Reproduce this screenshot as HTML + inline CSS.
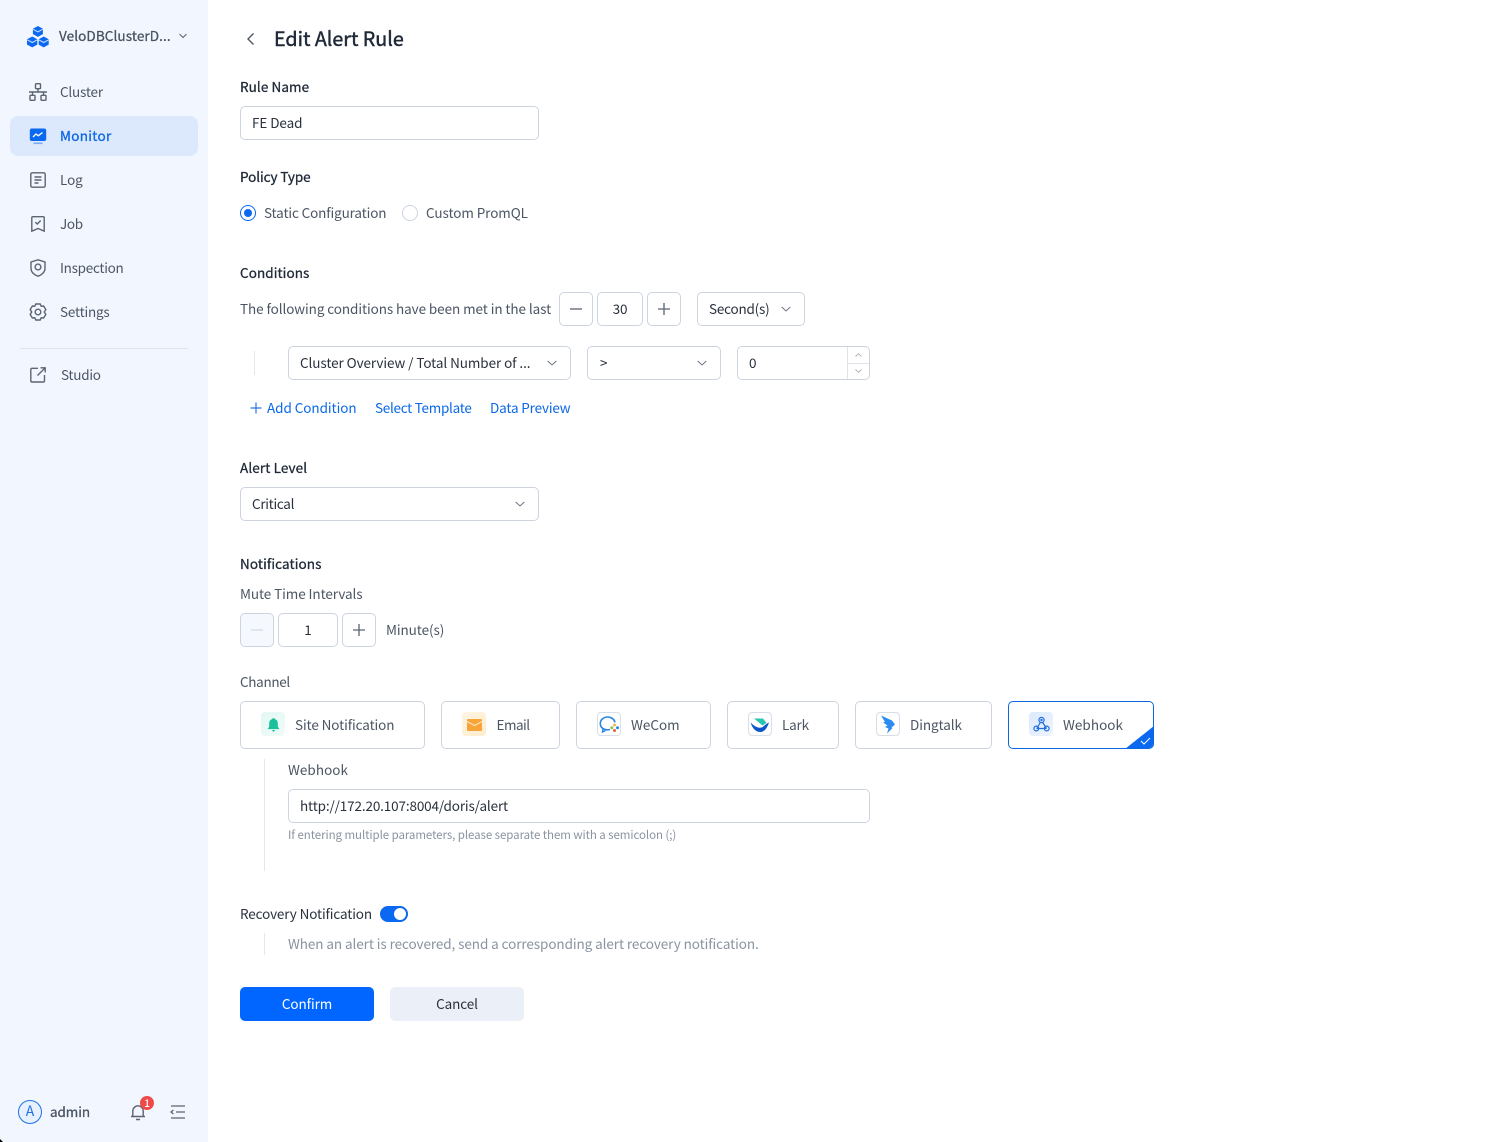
<!DOCTYPE html>
<html lang="en"><head><meta charset="utf-8"><title>Edit Alert Rule</title>
<style>
*{box-sizing:border-box}
html,body{margin:0;padding:0;width:1511px;height:1142px;overflow:hidden;background:#fff}
body{font-family:"Noto Sans CJK SC","Liberation Sans",sans-serif;font-size:13.5px;letter-spacing:-.08px;color:#4b5563;position:relative}
.t{position:absolute;white-space:nowrap;line-height:20px;height:20px;margin-top:-1px}
.b{position:absolute;background:#fff;border:1px solid #cdd4e0;border-radius:5px}
.l{color:#1f2937;-webkit-text-stroke:.3px #1f2937;letter-spacing:.08px}
.c{color:#2a313c}
.lnk{color:#0b68e6}
svg{position:absolute;overflow:visible}
.g{fill:none;stroke:#5b6472;stroke-width:1.4}
.ch{border-radius:5px;height:48px;top:701px}
.ic{position:absolute;top:712px;width:24px;height:24px;border-radius:4px}
.ic2{background:#fff;border:1px solid #d9dee7}
</style></head><body>

<div style="position:absolute;left:0;top:0;width:208px;height:1142px;background:#f2f7ff"></div>
<div style="position:absolute;left:10px;top:116px;width:188px;height:40px;border-radius:8px;background:#dce8fb"></div>
<div style="position:absolute;left:20px;top:348px;width:168px;height:1px;background:#dfe4ec"></div>

<!-- logo -->
<svg style="left:26px;top:25px" width="24" height="24" viewBox="0 0 24 24">
<path fill="#0b68f0" d="M11.900 1l5 2.700v5.400l-5 2.800-5-2.800V3.700z"/><path fill="#0b68f0" d="M6.300 11.500l5 2.800v5.300l-5 2.800-5.300-2.800v-5.300z"/><path fill="#0b68f0" d="M17.700 11.500l5 2.800v5.300l-5 2.800-5-2.800v-5.300z"/>
<path d="M7.200 4.300l4.700 2.600 4.700-2.600M1.300 14.800l5 2.700 5-2.700M12.700 14.800l5 2.700 5-2.700" fill="none" stroke="#cfe0fb" stroke-width="1"/></svg>
<div class="t" style="left:59px;top:26px;color:#4a5361;-webkit-text-stroke:.3px #4a5361;letter-spacing:.1px">VeloDBClusterD...</div>
<svg style="left:179px;top:33px" width="8" height="6" viewBox="0 0 8 6"><path d="M.5 1l3.500 3.500L7.500 1" fill="none" stroke="#5b6472" stroke-width="1"/></svg>

<!-- nav icons -->
<svg style="left:29px;top:83px" width="18" height="18" viewBox="0 0 18 18" class="g"><rect x="6.500" y=".7" width="5" height="5" rx=".8"/><rect x="1" y="12.300" width="5" height="5" rx=".8"/><rect x="12" y="12.300" width="5" height="5" rx=".8"/><path d="M9 5.700V9M3.500 12.300V9h11v3.300M0 9h18"/></svg>
<div class="t" style="left:60px;top:82px;letter-spacing:-.2px">Cluster</div>

<svg style="left:29px;top:128px" width="18" height="18" viewBox="0 0 18 18"><rect x=".8" y=".5" width="16.400" height="12.500" rx="2" fill="#0b68f0"/><rect x="4.500" y="14.500" width="9" height="1.600" fill="#7aaaf5"/><path d="M4 9l3-3 2.300 1.800L13.500 4.500" fill="none" stroke="#fff" stroke-width="1.300"/></svg>
<div class="t" style="left:60px;top:126px;color:#0b68e6;-webkit-text-stroke:.3px #0b68e6;letter-spacing:.3px">Monitor</div>

<svg style="left:30px;top:172px" width="16" height="16" viewBox="0 0 16 16" class="g"><rect x=".8" y=".8" width="14.400" height="14.400" rx="1.500"/><path d="M4.500 5h7M4.500 8h7M4.500 11h4"/></svg>
<div class="t" style="left:60px;top:170px">Log</div>

<svg style="left:31px;top:216px" width="14" height="16" viewBox="0 0 14 16" class="g"><path d="M.8 1.700q0-1 1-1h10.400q1 0 1 1v13.500L7 12.500.8 15.200z"/><path d="M4.300 6.200L6.300 8l3.400-3.500"/></svg>
<div class="t" style="left:60px;top:214px;letter-spacing:-.3px">Job</div>

<svg style="left:30px;top:259px" width="16" height="18" viewBox="0 0 16 18" class="g"><path d="M8 .8l7 2.200v6.500c0 3.600-3.200 6.400-7 7.700-3.800-1.300-7-4.100-7-7.700V3z"/><circle cx="8" cy="8" r="2.900"/></svg>
<div class="t" style="left:60px;top:258px;letter-spacing:-.28px">Inspection</div>

<svg style="left:29px;top:303px" width="18" height="18" viewBox="0 0 18 18" class="g"><path d="M6.800 1h4.400l1 2.200 2.400-.2 2.200 3.500L15.300 9l1.500 2.500-2.200 3.500-2.400-.2-1 2.200H6.800l-1-2.200-2.400.2-2.200-3.500L2.700 9 1.200 6.500 3.400 3l2.400.2z"/><circle cx="9" cy="9" r="2.800"/></svg>
<div class="t" style="left:60px;top:302px;letter-spacing:-.2px">Settings</div>

<svg style="left:30px;top:367px" width="16" height="16" viewBox="0 0 16 16" class="g"><path d="M8 1.300H2q-1.200 0-1.200 1.200v11.300q0 1.200 1.200 1.200h11.300q1.200 0 1.200-1.200V8"/><path d="M7.500 8.500L15 1M10.500.8h4.700v4.700"/></svg>
<div class="t" style="left:61px;top:365px;letter-spacing:-.25px">Studio</div>

<!-- footer -->
<div style="position:absolute;left:18px;top:1100px;width:24px;height:24px;border-radius:50%;border:1.300px solid #1e70e6;background:#e6f0fe;color:#1e70e6;text-align:center;line-height:21px;font-size:14px">A</div>
<div class="t" style="left:50px;top:1102px;color:#4b5563;-webkit-text-stroke:.3px #4b5563">admin</div>
<svg style="left:130px;top:1103px" width="16" height="18" viewBox="0 0 16 18" class="g"><path d="M1 13.500h14M2.800 13.500V8a5.200 5.200 0 0 1 10.400 0v5.500M6 16.500h4"/></svg>
<div style="position:absolute;left:140px;top:1096px;width:14px;height:14px;border-radius:50%;background:#f04b4b;color:#fff;font-size:10px;line-height:14px;text-align:center;font-weight:500">1</div>
<svg style="left:170px;top:1105px" width="15" height="14" viewBox="0 0 15 14" fill="none" stroke="#5b6472" stroke-width="1.300"><path d="M1 1h14M6 7h9M1 13h14M3.500 5L1 7l2.500 2"/></svg>
<div style="position:absolute;left:0;bottom:0;width:3px;height:3px;background:#000;clip-path:polygon(0 0,100% 100%,0 100%)"></div>

<!-- header -->
<svg style="left:246px;top:32px" width="9" height="14" viewBox="0 0 9 14"><path d="M7.500 1.500L2 7l5.500 5.500" fill="none" stroke="#4b5563" stroke-width="1.400"/></svg>
<div class="t" style="left:274px;top:26px;height:26px;line-height:26px;font-size:19.7px;letter-spacing:0;color:#1f2937;-webkit-text-stroke:.45px #1f2937">Edit Alert Rule</div>

<div class="t l" style="left:240px;top:77px">Rule Name</div>
<div class="b" style="left:240px;top:106px;width:299px;height:34px"></div>
<div class="t c" style="left:252px;top:113px">FE Dead</div>

<div class="t l" style="left:240px;top:167px;letter-spacing:-.08px">Policy Type</div>
<div style="position:absolute;left:240px;top:205px;width:16px;height:16px;border-radius:50%;border:1px solid #0b68f0;background:#fff"></div>
<div style="position:absolute;left:244px;top:209px;width:8px;height:8px;border-radius:50%;background:#0b68f0"></div>
<div class="t" style="left:264px;top:203px;letter-spacing:-.13px">Static Configuration</div>
<div style="position:absolute;left:402px;top:205px;width:16px;height:16px;border-radius:50%;border:1px solid #cdd4e0;background:#fff"></div>
<div class="t" style="left:426px;top:203px">Custom PromQL</div>

<div class="t l" style="left:240px;top:263px">Conditions</div>
<div class="t" style="left:240px;top:299px">The following conditions have been met in the last</div>
<div class="b" style="left:559px;top:292px;width:34px;height:34px"></div>
<svg style="left:570px;top:303px" width="12" height="12" viewBox="0 0 12 12"><path d="M0 6h12" stroke="#5b6472" stroke-width="1.300"/></svg>
<div class="b" style="left:597px;top:292px;width:46px;height:34px"></div>
<div class="t c" style="left:597px;top:299px;width:46px;text-align:center">30</div>
<div class="b" style="left:647px;top:292px;width:34px;height:34px"></div>
<svg style="left:658px;top:303px" width="12" height="12" viewBox="0 0 12 12"><path d="M0 6h12M6 0v12" stroke="#5b6472" stroke-width="1.300"/></svg>
<div class="b" style="left:697px;top:292px;width:108px;height:34px"></div>
<div class="t c" style="left:709px;top:299px;letter-spacing:-.2px">Second(s)</div>
<svg style="left:781px;top:306px" width="10" height="6" viewBox="0 0 10 6"><path d="M.7 1L5 5l4.300-4" fill="none" stroke="#6b7482"/></svg>

<div style="position:absolute;left:254px;top:351px;width:1px;height:24px;background:#e3e7ee"></div>
<div class="b" style="left:288px;top:346px;width:283px;height:34px"></div>
<div class="t c" style="left:300px;top:353px">Cluster Overview / Total Number of ...</div>
<svg style="left:547px;top:360px" width="10" height="6" viewBox="0 0 10 6"><path d="M.7 1L5 5l4.300-4" fill="none" stroke="#6b7482"/></svg>
<div class="b" style="left:587px;top:346px;width:134px;height:34px"></div>
<div class="t c" style="left:600px;top:353px">&gt;</div>
<svg style="left:697px;top:360px" width="10" height="6" viewBox="0 0 10 6"><path d="M.7 1L5 5l4.300-4" fill="none" stroke="#6b7482"/></svg>
<div class="b" style="left:737px;top:346px;width:133px;height:34px"></div>
<div style="position:absolute;left:847px;top:347px;width:1px;height:32px;background:#dfe3ea"></div>
<div style="position:absolute;left:847px;top:363px;width:22px;height:1px;background:#dfe3ea"></div>
<svg style="left:855px;top:353px" width="7" height="4" viewBox="0 0 7 4"><path d="M.5 3.500L3.500.7l3 2.800" fill="none" stroke="#a8afba" stroke-width=".9"/></svg>
<svg style="left:855px;top:369px" width="7" height="4" viewBox="0 0 7 4"><path d="M.5.500l3 2.800 3-2.800" fill="none" stroke="#a8afba" stroke-width=".9"/></svg>
<div class="t c" style="left:749px;top:353px">0</div>

<svg style="left:250px;top:402px" width="12" height="12" viewBox="0 0 12 12"><path d="M.5 6h11M6 .5v11" stroke="#2a76e6" stroke-width="1.200"/></svg>
<div class="t lnk" style="left:267px;top:398px;letter-spacing:-.06px">Add Condition</div>
<div class="t lnk" style="left:375px;top:398px;letter-spacing:-.28px">Select Template</div>
<div class="t lnk" style="left:490px;top:398px;letter-spacing:-.16px">Data Preview</div>

<div class="t l" style="left:240px;top:458px;letter-spacing:.12px">Alert Level</div>
<div class="b" style="left:240px;top:487px;width:299px;height:34px"></div>
<div class="t c" style="left:252px;top:494px;letter-spacing:-.3px">Critical</div>
<svg style="left:515px;top:501px" width="10" height="6" viewBox="0 0 10 6"><path d="M.7 1L5 5l4.300-4" fill="none" stroke="#6b7482"/></svg>

<div class="t l" style="left:240px;top:554px;letter-spacing:.1px">Notifications</div>
<div class="t" style="left:240px;top:584px">Mute Time Intervals</div>
<div class="b" style="left:240px;top:613px;width:34px;height:34px;background:#f5f8fd"></div>
<svg style="left:251px;top:624px" width="12" height="12" viewBox="0 0 12 12"><path d="M0 6h12" stroke="#d5dae3" stroke-width="1.300"/></svg>
<div class="b" style="left:278px;top:613px;width:60px;height:34px"></div>
<div class="t c" style="left:278px;top:620px;width:60px;text-align:center">1</div>
<div class="b" style="left:342px;top:613px;width:34px;height:34px"></div>
<svg style="left:353px;top:624px" width="12" height="12" viewBox="0 0 12 12"><path d="M0 6h12M6 0v12" stroke="#5b6472" stroke-width="1.300"/></svg>
<div class="t" style="left:386px;top:620px">Minute(s)</div>

<div class="t" style="left:240px;top:672px;letter-spacing:-.32px">Channel</div>

<div class="b ch" style="left:240px;width:185px"></div>
<div class="ic" style="left:261px;background:linear-gradient(135deg,#e3f8f2,#f1fbf8)"></div>
<svg style="left:266.500px;top:717.500px" width="13" height="14" viewBox="0 0 12 13"><path fill="#1cc09a" d="M6 0c.6 0 1 .4 1 .9 1.900.4 3 2 3 4V8l1.500 2.300H.5L2 8V4.900c0-2 1.100-3.500 3-4C5 .4 5.400 0 6 0zM4.500 11.200h3L6 13z"/></svg>
<div class="t" style="left:295px;top:715px;letter-spacing:-.1px">Site Notification</div>

<div class="b ch" style="left:441px;width:119px"></div>
<div class="ic" style="left:462px;background:linear-gradient(135deg,#fff4e2,#ffeccd)"></div>
<svg style="left:467px;top:719px" width="15" height="12" viewBox="0 0 15 12"><rect width="15" height="12" rx="1" fill="#f7a53a"/><path d="M0 2.500l7.500 4 7.500-4" fill="none" stroke="#ffe6c0" stroke-width="1"/></svg>
<div class="t" style="left:496.500px;top:715px;letter-spacing:-.5px">Email</div>

<div class="b ch" style="left:576px;width:135px"></div>
<div class="ic ic2" style="left:597px"></div>
<svg style="left:599px;top:715px" width="21" height="19" viewBox="0 0 21 19"><path d="M11 14.500C6 15.500 1.300 13.500 1.300 8.500 1.300 4.500 5 2 8.500 2c3.700 0 6.700 2 7.500 5.300" fill="none" stroke="#2b87e3" stroke-width="1.600"/><path d="M4 14l-.5 3 3-1.500" fill="none" stroke="#2b87e3" stroke-width="1.400"/><circle cx="15.500" cy="10" r="1.500" fill="#f2b84b"/><circle cx="18.500" cy="12.800" r="1.500" fill="#2b87e3"/><circle cx="12.800" cy="12.800" r="1.500" fill="#89c54b"/><circle cx="15.500" cy="15.500" r="1.500" fill="#e2603f"/></svg>
<div class="t" style="left:631px;top:715px;letter-spacing:0">WeCom</div>

<div class="b ch" style="left:727px;width:112px"></div>
<div class="ic ic2" style="left:748px"></div>
<svg style="left:750px;top:718px" width="20" height="15" viewBox="0 0 20 15"><path fill="#2ac5b0" d="M4 .5h9l3.500 4.500-4 2.500z"/><path fill="#0b55c8" d="M.5 4.500c3 3 7 6 11 5 2-.5 4-3.500 7.500-5-1.500 4-3.500 9.500-9 9.500C5 14 2 9 .5 4.500z"/></svg>
<div class="t" style="left:782px;top:715px;letter-spacing:-.2px">Lark</div>

<div class="b ch" style="left:855px;width:137px"></div>
<div class="ic ic2" style="left:876px"></div>
<svg style="left:881px;top:715px" width="15" height="19" viewBox="0 0 15 19"><path fill="#2a8cf0" d="M0 .5l11 5 3 4-3.500 3 1 .5L6 18.500l1.500-5L4 12 6.500 10.500 2 7.500 4 7z"/></svg>
<div class="t" style="left:910px;top:715px">Dingtalk</div>

<div class="b ch" style="left:1008px;width:146px;border:1.300px solid #0b68e0;overflow:hidden">
<div style="position:absolute;right:-1px;bottom:-1px;width:29px;height:23px;background:#0b68f0;clip-path:polygon(100% 0,100% 100%,0 100%)"></div>
</div>
<svg style="left:1140px;top:737px" width="11" height="8" viewBox="0 0 11 8"><path d="M1 4l3 3 6-6" fill="none" stroke="#fff" stroke-width="1"/></svg>
<div class="ic" style="left:1029px;background:linear-gradient(135deg,#dce9fd,#eef4ff)"></div>
<svg style="left:1033px;top:716px" width="17" height="17" viewBox="0 0 17 17" fill="none" stroke="#1e6fe0" stroke-width="1.200"><circle cx="8.500" cy="4" r="2.600"/><circle cx="8.500" cy="4" r=".6" fill="#1e6fe0"/><circle cx="3.300" cy="12.500" r="2.400"/><circle cx="13.700" cy="12.500" r="2.400"/><path d="M7.300 6.500L3.800 12.500M9.700 6.500l3.800 6M3.500 12.500h10"/></svg>
<div class="t" style="left:1063px;top:715px;letter-spacing:.05px">Webhook</div>

<div style="position:absolute;left:264px;top:759px;width:1px;height:112px;background:#e3e7ee"></div>
<div class="t" style="left:288px;top:760px;letter-spacing:.05px">Webhook</div>
<div class="b" style="left:288px;top:789px;width:582px;height:34px"></div>
<div class="t c" style="left:300px;top:796px;letter-spacing:-.14px">http://172.20.107:8004/doris/alert</div>
<div class="t" style="left:288px;top:825px;margin-top:0;font-size:11.5px;letter-spacing:-.07px;color:#8a93a0">If entering multiple parameters, please separate them with a semicolon (;)</div>

<div class="t c" style="left:240px;top:904px;letter-spacing:-.13px">Recovery Notification</div>
<div style="position:absolute;left:380px;top:906px;width:28px;height:16px;border-radius:8px;background:#0b68f0"></div>
<div style="position:absolute;left:394px;top:908px;width:12px;height:12px;border-radius:50%;background:#fff"></div>
<div style="position:absolute;left:264px;top:933px;width:1px;height:22px;background:#e3e7ee"></div>
<div class="t" style="left:288px;top:934px;color:#8a93a0">When an alert is recovered, send a corresponding alert recovery notification.</div>

<div style="position:absolute;left:240px;top:987px;width:134px;height:34px;border-radius:5px;background:#0066ff;color:#fff;text-align:center;line-height:32px">Confirm</div>
<div style="position:absolute;left:390px;top:987px;width:134px;height:34px;border-radius:5px;background:#ebf0f8;color:#2a313c;text-align:center;line-height:32px">Cancel</div>

</body></html>
